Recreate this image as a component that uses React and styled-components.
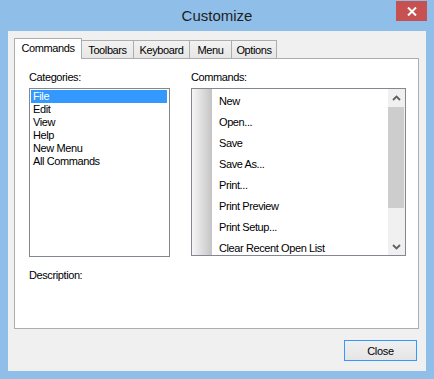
import React from "react";
import styled, { createGlobalStyle } from "styled-components";

const Global = createGlobalStyle`
  html, body {
    margin: 0;
    padding: 0;
    background: #8fbfe9;
  }
  body {
    font-family: "Liberation Sans", Arial, sans-serif;
  }
`;

const Window = styled.div`
  width: 434px;
  height: 379px;
  background: #8fbfe9;
  display: flex;
  flex-direction: column;
  box-sizing: border-box;
`;

const TitleBar = styled.div`
  height: 31px;
  display: flex;
  align-items: center;
  justify-content: center;
  position: relative;
`;

const Title = styled.div`
  font-size: 15px;
  color: #1e1e1e;
  margin-top: -1px;
`;

const CloseX = styled.div`
  position: absolute;
  top: 1px;
  right: 7px;
  width: 31px;
  height: 20px;
  background: #c75050;
  display: flex;
  align-items: center;
  justify-content: center;
`;

const Client = styled.div`
  margin: 0 8px 8px;
  height: 340px;
  background: #f0f0f0;
  display: flex;
  flex-direction: column;
  padding-top: 7px;
  box-sizing: border-box;
`;

const TabRow = styled.div`
  display: flex;
  align-items: flex-end;
  height: 21px;
  margin: 0 0 -1px 6px;
  position: relative;
  z-index: 1;
`;

const Tab = styled.div`
  box-sizing: border-box;
  width: ${p => p.w}px;
  height: ${p => (p.active ? 21 : 18)}px;
  margin-bottom: ${p => (p.active ? 0 : 1)}px;
  margin-left: ${p => (p.first ? 0 : -1)}px;
  border: 1px solid #adadad;
  border-bottom: none;
  background: ${p =>
    p.active ? "#ffffff" : "linear-gradient(#f2f2f2, #e6e6e6)"};
  font-size: 11px;
  letter-spacing: -0.4px;
  color: #000;
  display: flex;
  align-items: center;
  justify-content: center;
  padding-bottom: ${p => (p.active ? 2 : 0)}px;
  position: relative;
  z-index: ${p => (p.active ? 2 : 1)};
`;

const Panel = styled.div`
  margin: 0 7px 0 6px;
  height: 271px;
  box-sizing: border-box;
  background: #fff;
  border: 1px solid #adadad;
  padding: 12px 11px 0 14px;
  display: flex;
  flex-direction: column;
`;

const Columns = styled.div`
  display: flex;
  gap: 21px;
`;

const Column = styled.div`
  width: ${p => p.w}px;
  display: flex;
  flex-direction: column;
  gap: 4px;
`;

const Label = styled.div`
  font-size: 11px;
  letter-spacing: -0.4px;
  line-height: 13px;
  color: #000;
  margin-top: ${p => p.mt || 0}px;
`;

const ListBox = styled.div`
  box-sizing: border-box;
  height: 169px;
  border: 1px solid #828790;
  background: #fff;
  padding: 1px;
`;

const Item = styled.div`
  height: 13px;
  line-height: 13px;
  font-size: 11px;
  letter-spacing: -0.4px;
  padding-left: 2px;
  margin-right: 1px;
  background: ${p => (p.selected ? "#3399ff" : "transparent")};
  color: ${p => (p.selected ? "#fff" : "#000")};
`;

const CmdBox = styled.div`
  box-sizing: border-box;
  height: 168px;
  border: 1px solid #828790;
  background: #fff;
  display: flex;
  overflow: hidden;
`;

const CmdItems = styled.div`
  flex: 1;
  padding-top: 2px;
  background: linear-gradient(90deg, #f6f6f6 0px, #c4c4c4 20px, #ffffff 20px);
  overflow: hidden;
`;

const CmdItem = styled.div`
  height: 21px;
  line-height: 21px;
  font-size: 11px;
  letter-spacing: -0.4px;
  padding-left: 27px;
  color: #000;
  white-space: nowrap;
`;

const ScrollBar = styled.div`
  width: 17px;
  background: #f0f0f0;
  display: flex;
  flex-direction: column;
`;

const Arrow = styled.div`
  height: 17px;
  display: flex;
  align-items: center;
  justify-content: center;
`;

const Track = styled.div`
  flex: 1;
  padding: 1px 1px 0 0;
`;

const Thumb = styled.div`
  height: 101px;
  background: #cdcdcd;
`;

const Footer = styled.div`
  display: flex;
  justify-content: flex-end;
  padding: 11px 9px 0 0;
`;

const Button = styled.button`
  width: 73px;
  height: 21px;
  box-sizing: border-box;
  border: 1px solid #3399ff;
  background: linear-gradient(#f0f0f0, #e5e5e5);
  font-family: "Liberation Sans", Arial, sans-serif;
  font-size: 11px;
  letter-spacing: -0.3px;
  color: #000;
  padding: 0;
`;

const Chevron = ({ up }) => (
  <svg width="9" height="6" viewBox="0 0 9 6">
    <polyline
      points={up ? "1,5 4.5,1.5 8,5" : "1,1 4.5,4.5 8,1"}
      fill="none"
      stroke="#606060"
      strokeWidth="1.8"
    />
  </svg>
);

const tabs = [
  { name: "Commands", w: 68 },
  { name: "Toolbars", w: 53 },
  { name: "Keyboard", w: 57 },
  { name: "Menu", w: 43 },
  { name: "Options", w: 46 }
];

const categories = ["File", "Edit", "View", "Help", "New Menu", "All Commands"];

const commands = [
  "New",
  "Open...",
  "Save",
  "Save As...",
  "Print...",
  "Print Preview",
  "Print Setup...",
  "Clear Recent Open List"
];

const App = () => {
  return (
    <Window>
      <Global />
      <TitleBar>
        <Title>Customize</Title>
        <CloseX>
          <svg width="10" height="9" viewBox="0 0 10 9">
            <path d="M1 0.5 L9 8.5 M9 0.5 L1 8.5" stroke="#fff" strokeWidth="2" />
          </svg>
        </CloseX>
      </TitleBar>
      <Client>
        <TabRow>
          {tabs.map((t, i) => (
            <Tab key={t.name} w={t.w} active={i === 0} first={i === 0}>
              {t.name}
            </Tab>
          ))}
        </TabRow>
        <Panel>
          <Columns>
            <Column w={141}>
              <Label>Categories:</Label>
              <ListBox>
                {categories.map((c, i) => (
                  <Item key={c} selected={i === 0}>
                    {c}
                  </Item>
                ))}
              </ListBox>
            </Column>
            <Column w={215}>
              <Label>Commands:</Label>
              <CmdBox>
                <CmdItems>
                  {commands.map(c => (
                    <CmdItem key={c}>{c}</CmdItem>
                  ))}
                </CmdItems>
                <ScrollBar>
                  <Arrow>
                    <Chevron up />
                  </Arrow>
                  <Track>
                    <Thumb />
                  </Track>
                  <Arrow>
                    <Chevron />
                  </Arrow>
                </ScrollBar>
              </CmdBox>
            </Column>
          </Columns>
          <Label mt={12}>Description:</Label>
        </Panel>
        <Footer>
          <Button>Close</Button>
        </Footer>
      </Client>
    </Window>
  );
};

export default App;
